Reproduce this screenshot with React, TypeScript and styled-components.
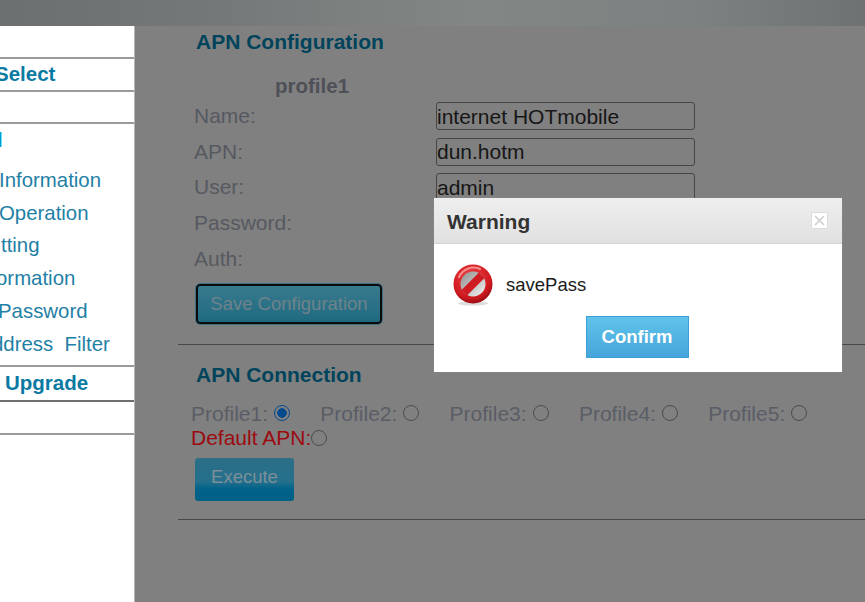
import styled, { createGlobalStyle } from "styled-components";

const GlobalStyle = createGlobalStyle`
  html, body {
    margin: 0;
    padding: 0;
    height: 100%;
    overflow: hidden;
    background: #808080;
    font-family: "Liberation Sans", Arial, sans-serif;
  }
`;

const Page = styled.div`
  position: relative;
  width: 865px;
  height: 602px;
  overflow: hidden;
  display: flex;
  flex-direction: column;
`;

const TopBar = styled.div`
  height: 26px;
  flex: none;
  background: linear-gradient(90deg, #6c6f70 0%, #757878 25%, #828786 55%, #7c8181 80%, #6e7272 100%);
`;

const Body = styled.div`
  flex: 1;
  display: flex;
`;

const Side = styled.div`
  width: 134px;
  flex: none;
  background: #fff;
  border-right: 1px solid #b5b5b5;
  overflow: hidden;
  white-space: nowrap;
`;

const SideHead = styled.div<{ $h: number; $shift?: number; $thick?: boolean }>`
  height: ${(p) => p.$h}px;
  box-sizing: border-box;
  border-bottom: ${(p) => (p.$thick ? "2px solid #6e6e6e" : "2px solid #9a9a9a")};
  padding-left: ${(p) => Math.max(p.$shift ?? 0, 0)}px;
  margin-left: ${(p) => Math.min(p.$shift ?? 0, 0)}px;
  font-size: 20.5px;
  font-weight: 700;
  color: #0a7aa3;
  line-height: ${(p) => p.$h - 3}px;
`;

const SubList = styled.div`
  height: 243px;
  box-sizing: border-box;
  padding-top: 0;
  border-bottom: 2px solid #9a9a9a;
`;

const SubItem = styled.div<{ $shift: number; $bright?: boolean; $gap?: number }>`
  height: 32.8px;
  line-height: 32.8px;
  margin-left: ${(p) => p.$shift}px;
  margin-top: ${(p) => p.$gap ?? 0}px;
  font-size: 20.4px;
  color: ${(p) => (p.$bright ? "#0099cc" : "#1f80a6")};
`;

const Main = styled.div`
  flex: 1;
  padding-left: 43px;
`;

const Section = styled.section`
  border-bottom: 1px solid #484848;
`;

const Title = styled.h2<{ $top: number }>`
  margin: ${(p) => p.$top}px 0 0 18px;
  font-size: 21px;
  line-height: 24px;
  font-weight: 700;
  color: #00445c;
`;

const ProfileName = styled.div`
  margin: 20px 0 0 97px;
  font-size: 20.5px;
  line-height: 24px;
  font-weight: 700;
  color: #4e5058;
`;

const Form = styled.div`
  margin: 4px 0 0 16px;
  display: grid;
  grid-template-columns: 242px 259px;
  grid-auto-rows: 28px;
  row-gap: 7.7px;
  align-items: center;
`;

const Label = styled.label`
  font-size: 21px;
  color: #565960;
`;

const TextBox = styled.input`
  box-sizing: border-box;
  width: 259px;
  height: 28px;
  padding: 1px 0 0 0;
  background: transparent;
  border: 1.5px solid #464646;
  border-radius: 3px;
  outline: none;
  font-family: inherit;
  font-size: 21px;
  color: #161616;
`;

const SaveButton = styled.button`
  display: block;
  box-sizing: border-box;
  width: 186px;
  height: 40px;
  margin: 11px 0 20px 18px;
  padding: 0;
  border: 2px solid #0b0b0b;
  border-radius: 4px;
  outline: 1px solid #3c6f80;
  background: linear-gradient(180deg, #387a8e 0%, #1f6a80 100%);
  color: #6f838b;
  font-family: inherit;
  font-size: 18.5px;
`;

const RadioRow = styled.div`
  margin: 15px 0 0 13px;
  display: flex;
  align-items: center;
  height: 24px;
  font-size: 21px;
  color: #5a5d66;
`;

const RadioItem = styled.label`
  width: 129.3px;
  flex: none;
  display: flex;
  align-items: center;
`;

const Radio = styled.input.attrs({ type: "radio" })`
  appearance: none;
  box-sizing: border-box;
  width: 16px;
  height: 16px;
  margin: 0 0 2px 6px;
  border: 1.5px solid #4c4c4c;
  border-radius: 50%;
  background: transparent;
  &:checked {
    border-color: #034a8f;
    background: radial-gradient(circle, #034a8f 0 4.5px, transparent 5px);
  }
`;

const DefaultRow = styled.label`
  margin-left: 13px;
  display: flex;
  align-items: center;
  height: 24px;
  font-size: 21px;
  color: #9c0a10;
  ${Radio} {
    margin: 0;
  }
`;

const ExecuteButton = styled.button`
  display: block;
  box-sizing: border-box;
  width: 99px;
  height: 43px;
  margin: 8px 0 18px 17px;
  padding: 0 0 4px;
  border: none;
  border-radius: 3px;
  background: linear-gradient(180deg, #2c6e86 0%, #24708d 55%, #00628a 72%, #005f84 100%);
  color: #7d8f97;
  font-family: inherit;
  font-size: 18.5px;
`;

const Dialog = styled.div`
  position: absolute;
  left: 434px;
  top: 198px;
  width: 408px;
  height: 174px;
  background: #fff;
  box-shadow: 0 0 1px #999;
`;

const DialogHead = styled.div`
  height: 46px;
  box-sizing: border-box;
  display: flex;
  align-items: center;
  justify-content: space-between;
  padding: 2px 14px 0 13px;
  border-bottom: 1px solid #d4d4d4;
  background: linear-gradient(180deg, #eeeeee 0%, #e1e1e1 100%);
`;

const DialogTitle = styled.div`
  font-size: 21px;
  font-weight: 700;
  color: #333;
`;

const CloseBox = styled.div`
  width: 17px;
  height: 17px;
  box-sizing: border-box;
  margin-top: -2px;
  display: flex;
  align-items: center;
  justify-content: center;
  border: 1px solid #dcdcdc;
  background: #fff;
`;

const Message = styled.div`
  display: flex;
  align-items: center;
  gap: 11px;
  padding: 20px 0 0 19px;
  font-size: 18.5px;
  color: #1a1a1a;
`;

const Actions = styled.div`
  display: flex;
  justify-content: center;
  margin-top: 10px;
  padding-right: 2px;
`;

const ConfirmButton = styled.button`
  width: 103px;
  height: 42px;
  box-sizing: border-box;
  padding: 0;
  border: 1px solid #3d9fd8;
  background: linear-gradient(180deg, #5fc3ea 0%, #46a5da 100%);
  color: #fff;
  font-family: inherit;
  font-size: 18.5px;
  font-weight: 700;
`;

const StopIcon = () => (
  <svg width="42" height="42" viewBox="0 0 42 42">
    <defs>
      <radialGradient id="ring" cx="45%" cy="35%" r="70%">
        <stop offset="0%" stopColor="#f0484c" />
        <stop offset="70%" stopColor="#d01a20" />
        <stop offset="100%" stopColor="#8c0a10" />
      </radialGradient>
      <linearGradient id="glass" x1="0" y1="0" x2="1" y2="1">
        <stop offset="0%" stopColor="#8e8e8e" />
        <stop offset="100%" stopColor="#f4f4f4" />
      </linearGradient>
    </defs>
    <ellipse cx="20" cy="39.5" rx="15" ry="2" fill="#ddd" />
    <circle cx="20" cy="20" r="19.5" fill="url(#ring)" />
    <circle cx="20" cy="20" r="12.5" fill="url(#glass)" />
    <path d="M8.5 26 L26 8.5 L31.5 14 L14 31.5 Z" fill="#cf1b22" />
    <path d="M6 13 A16 16 0 0 1 27 5" fill="none" stroke="#f58f90" strokeWidth="2" strokeLinecap="round" />
  </svg>
);

export default function App() {
  const profiles = ["Profile1:", "Profile2:", "Profile3:", "Profile4:", "Profile5:"];
  return (
    <Page>
      <GlobalStyle />
      <TopBar />
      <Body>
        <Side>
          <SideHead $h={33} />
          <SideHead $h={33} $shift={-5}>Select</SideHead>
          <SideHead $h={32} />
          <SubList>
            <SubItem $shift={-3} $bright>
              <b>l</b>
            </SubItem>
            <SubItem $shift={-1} $gap={7}>Information</SubItem>
            <SubItem $shift={-1}>Operation</SubItem>
            <SubItem $shift={1}>tting</SubItem>
            <SubItem $shift={-4}>ormation</SubItem>
            <SubItem $shift={-2}>Password</SubItem>
            <SubItem $shift={-8}>ddress&nbsp; Filter</SubItem>
          </SubList>
          <SideHead $h={35} $shift={5} $thick>Upgrade</SideHead>
          <SideHead $h={33} />
        </Side>
        <Main>
          <Section>
            <Title $top={4}>APN Configuration</Title>
            <ProfileName>profile1</ProfileName>
            <Form>
              <Label>Name:</Label>
              <TextBox readOnly value="internet HOTmobile" />
              <Label>APN:</Label>
              <TextBox readOnly value="dun.hotm" />
              <Label>User:</Label>
              <TextBox readOnly value="admin" />
              <Label>Password:</Label>
              <TextBox readOnly type="password" value="admin" />
              <Label>Auth:</Label>
              <TextBox readOnly value="" />
            </Form>
            <SaveButton>Save Configuration</SaveButton>
          </Section>
          <Section>
            <Title $top={18}>APN Connection</Title>
            <RadioRow>
              {profiles.map((name, i) => (
                <RadioItem key={name}>
                  {name}
                  <Radio name="apn" defaultChecked={i === 0} />
                </RadioItem>
              ))}
            </RadioRow>
            <DefaultRow>
              Default APN:
              <Radio name="apn" />
            </DefaultRow>
            <ExecuteButton>Execute</ExecuteButton>
          </Section>
        </Main>
      </Body>
      <Dialog>
        <DialogHead>
          <DialogTitle>Warning</DialogTitle>
          <CloseBox>
            <svg width="13" height="13" viewBox="0 0 13 13">
              <path d="M2 2 L11 11 M11 2 L2 11" stroke="#cfcfcf" strokeWidth="1.6" />
            </svg>
          </CloseBox>
        </DialogHead>
        <Message>
          <StopIcon />
          savePass
        </Message>
        <Actions>
          <ConfirmButton>Confirm</ConfirmButton>
        </Actions>
      </Dialog>
    </Page>
  );
}
